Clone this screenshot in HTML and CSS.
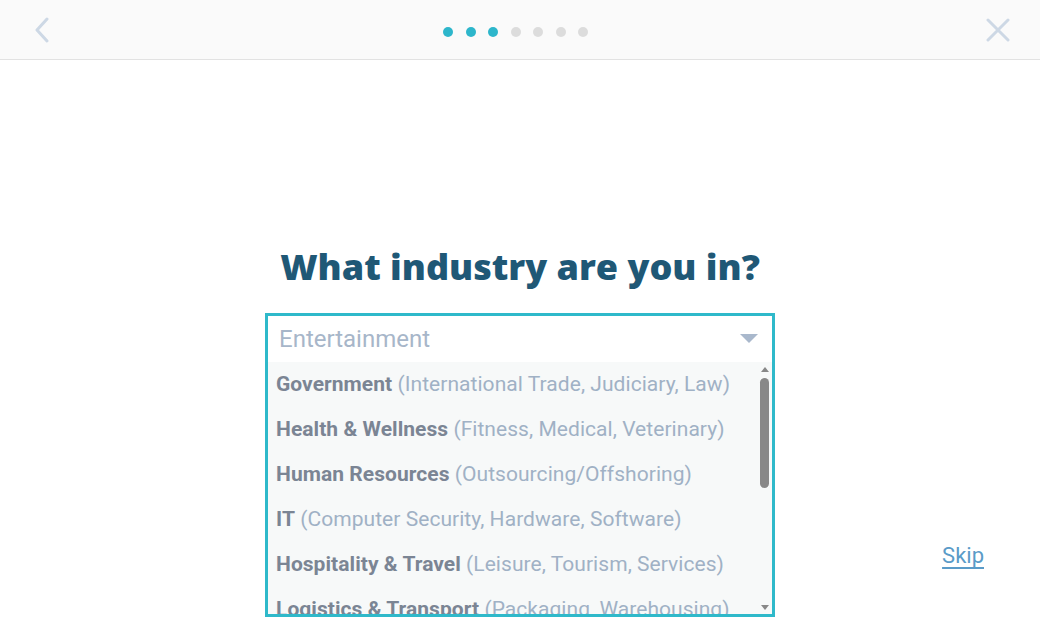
FILE: index.html
```html
<!DOCTYPE html>
<html>
<head>
    <link rel="stylesheet" href="styles.css">
</head>
<body>
<div class="topbar">
    <svg class="nav-icon back" width="16" height="26" viewBox="0 0 16 26">
        <path d="M13 2 L3 13 L13 24" fill="none" stroke="#cdd8e5" stroke-width="3" stroke-linecap="round" stroke-linejoin="round"/>
    </svg>
    <div class="dots">
        <span class="dot on"></span>
        <span class="dot on"></span>
        <span class="dot on"></span>
        <span class="dot"></span>
        <span class="dot"></span>
        <span class="dot"></span>
        <span class="dot"></span>
    </div>
    <svg class="nav-icon close" width="24" height="24" viewBox="0 0 24 24">
        <path d="M2 2 L22 22 M22 2 L2 22" fill="none" stroke="#cdd8e5" stroke-width="3" stroke-linecap="round"/>
    </svg>
</div>

<div id="main">
    <div class="side"></div>
    <div class="center">
        <h1 class="title">What industry are you in?</h1>
        <div class="select">
            <div class="select-head">
                <span class="placeholder">Entertainment</span>
                <span class="caret"></span>
            </div>
            <div class="select-body">
                <div class="options">
                    <div class="option"><b>Government</b> (International Trade, Judiciary, Law)</div>
                    <div class="option"><b>Health &amp; Wellness</b> (Fitness, Medical, Veterinary)</div>
                    <div class="option"><b>Human Resources</b> (Outsourcing/Offshoring)</div>
                    <div class="option"><b>IT</b> (Computer Security, Hardware, Software)</div>
                    <div class="option"><b>Hospitality &amp; Travel</b> (Leisure, Tourism, Services)</div>
                    <div class="option"><b>Logistics &amp; Transport</b> (Packaging, Warehousing)</div>
                </div>
                <div class="scrollbar">
                    <span class="arrow up"></span>
                    <span class="thumb"></span>
                    <span class="arrow down"></span>
                </div>
            </div>
        </div>
    </div>
    <div class="side right">
        <a class="skip" href="#">Skip</a>
    </div>
</div>
</body>
</html>
```

FILE: styles.css
```css
* {
    box-sizing: border-box;
}

body {
    margin: 0;
    background-color: #ffffff;
    font-family: Roboto, "Liberation Sans", sans-serif;
    height: 628px;
    overflow: hidden;
}

.topbar {
    height: 60px;
    background-color: #fafafa;
    border-bottom: solid 1px #e2e2e2;
    display: grid;
    grid-template-columns: 1fr auto 1fr;
    align-items: center;
    padding: 0 30px 0 34px;
}

.nav-icon {
    display: block;
}

.nav-icon.close {
    justify-self: end;
}

.dots {
    display: flex;
    gap: 12.5px;
    margin-right: 13px;
    margin-top: 4px;
}

.dot {
    width: 10px;
    height: 10px;
    border-radius: 50%;
    background-color: #dcdcdc;
}

.dot.on {
    background-color: #2db6cb;
}

#main {
    display: grid;
    grid-template-columns: 1fr 510px 1fr;
    padding-top: 184px;
}

.center {
    display: flex;
    flex-direction: column;
    align-items: center;
}

.title {
    margin: 0 0 24px 0;
    font-family: "Open Sans", sans-serif;
    font-weight: 800;
    font-size: 36px;
    line-height: 45px;
    color: #1f5876;
    white-space: nowrap;
}

.select {
    width: 510px;
    height: 304px;
    border: solid 3px #2fb9ca;
    display: flex;
    flex-direction: column;
}

.select-head {
    height: 46px;
    flex: none;
    display: flex;
    align-items: center;
    justify-content: space-between;
    padding: 0 14px 0 11px;
    background-color: #ffffff;
}

.placeholder {
    font-size: 24px;
    color: #a7b6c9;
}

.caret {
    width: 0;
    height: 0;
    border-left: 9px solid transparent;
    border-right: 9px solid transparent;
    border-top: 9px solid #a9b8cc;
    margin-top: -2px;
}

.select-body {
    flex: 1;
    display: flex;
    background-color: #f7f9f9;
    overflow: hidden;
}

.options {
    flex: 1;
    overflow: hidden;
}

.option {
    height: 45px;
    line-height: 45px;
    padding-left: 8px;
    font-size: 21px;
    letter-spacing: 0.05px;
    color: #a0b1c5;
    white-space: nowrap;
}

.option b {
    font-weight: bold;
    color: #7b8594;
}

.scrollbar {
    width: 15px;
    flex: none;
    display: flex;
    flex-direction: column;
    align-items: center;
    padding: 5px 0 4px 0;
}

.thumb {
    width: 9px;
    height: 110px;
    margin-top: 6px;
    border-radius: 5px;
    background-color: #888888;
}

.arrow {
    width: 0;
    height: 0;
    border-left: 4px solid transparent;
    border-right: 4px solid transparent;
}

.arrow.up {
    border-bottom: 5px solid #888888;
}

.arrow.down {
    margin-top: auto;
    border-top: 5px solid #888888;
}

.side.right {
    display: flex;
    justify-content: flex-end;
    align-items: flex-end;
    padding: 0 56px 49px 0;
}

.skip {
    font-size: 22px;
    color: #5a9bc8;
    text-decoration: underline;
    text-underline-offset: 4px;
}
```
